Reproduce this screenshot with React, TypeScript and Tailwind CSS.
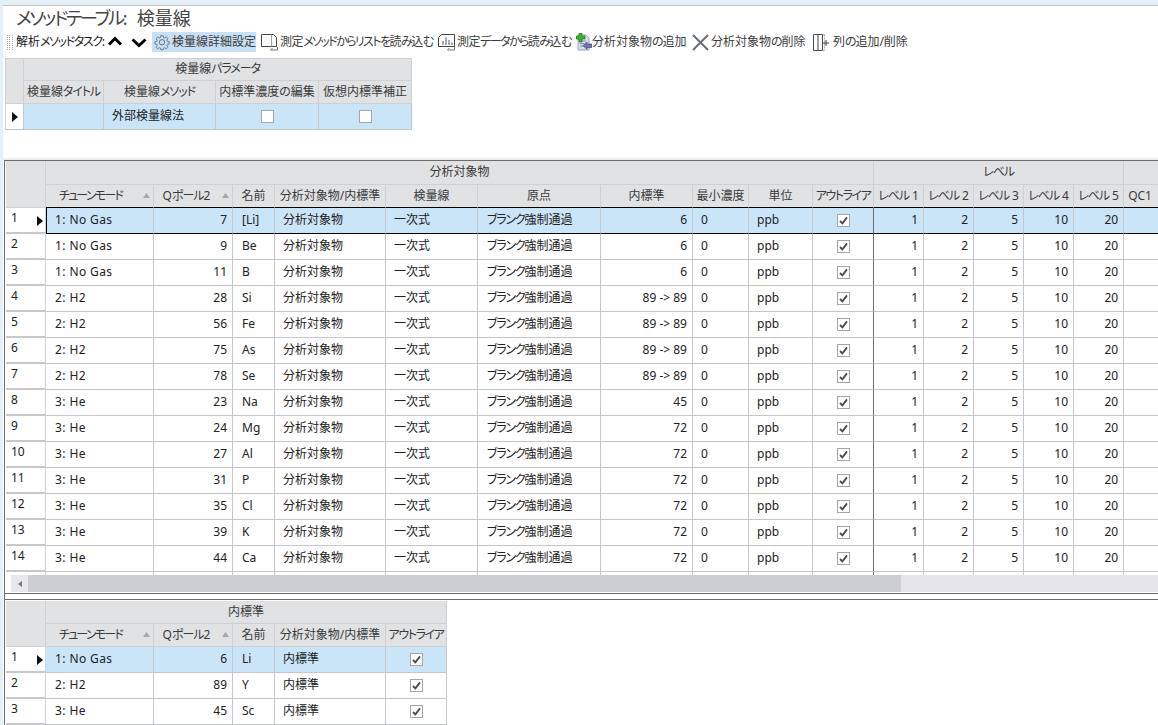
import React from "react";

const K = ({ t, extra }: { t: string; extra?: string }) => (
  <>
    {t.split(/([ぁ-んァ-ヶー]+)/).map((p, i) =>
      i % 2 === 1 ? (
        <span key={i} className={extra ?? "tracking-[-0.09em]"}>{p}</span>
      ) : (
        <React.Fragment key={i}>{p}</React.Fragment>
      )
    )}
  </>
);

const Arrow = () => (
  <svg width="6" height="10" viewBox="0 0 6 10" className="shrink-0">
    <path d="M0 0L6 5L0 10Z" fill="#111" />
  </svg>
);

const Check = ({ checked }: { checked: boolean }) => (
  <span className="inline-flex w-[13px] h-[13px] border border-[#a6a6a6] bg-white items-center justify-center align-middle">
    {checked && (
      <svg width="9" height="9" viewBox="0 0 9 9">
        <path d="M1 5L3.4 7.4L8 1.4" fill="none" stroke="#4a4a4a" strokeWidth="1.8" />
      </svg>
    )}
  </span>
);

const Sort = () => (
  <svg width="7" height="5" viewBox="0 0 7 5" className="shrink-0">
    <path d="M3.5 0L7 5H0Z" fill="#a8a8ac" />
  </svg>
);

const Gear = () => (
  <svg width="18" height="18" viewBox="0 0 24 24" fill="none" stroke="#5b6f80" strokeWidth="1.3" className="shrink-0">
    <path d="M10.3 2.5h3.4l.5 2.9 1.8.8 2.4-1.7 2.4 2.4-1.7 2.4.8 1.8 2.6.5v3.4l-2.6.5-.8 1.8 1.7 2.4-2.4 2.4-2.4-1.7-1.8.8-.5 2.3h-3.4l-.5-2.3-1.8-.8-2.4 1.7-2.4-2.4 1.7-2.4-.8-1.8-2.6-.5v-3.4l2.6-.5.8-1.8-1.7-2.4 2.4-2.4 2.4 1.7 1.8-.8z" transform="translate(1.2 1.2) scale(.9)" />
    <circle cx="12" cy="12.4" r="3.6" />
  </svg>
);

const ListImport = () => (
  <svg width="18" height="18" viewBox="0 0 18 18" fill="none" className="shrink-0">
    <path d="M.5 1.5h10v12H.5z" fill="#fff" stroke="#444" />
    <path d="M10.5 1.5h2l3 3v9h-5" fill="#fff" stroke="#444" />
    <path d="M16.5 14v3H9.5M9.5 17l2-2" stroke="#777" />
  </svg>
);

const DataImport = () => (
  <svg width="18" height="18" viewBox="0 0 18 18" fill="none" className="shrink-0">
    <path d="M.5 13.5v-9l3-3h13v12z" fill="#fff" stroke="#444" />
    <path d="M5 12V8M8 12V4.500M11 12V7M14 12V9.500" stroke="#555" />
    <path d="M16.500 14v3H9.500M9.500 17l2-2" stroke="#777" />
  </svg>
);

const AddAnalyte = () => (
  <svg width="16" height="18" viewBox="0 0 16 18" className="shrink-0">
    <path d="M2 2h8l3 3v12H2z" fill="#d4dcea" stroke="#9aa6bb" />
    <path d="M4 8h6M4 10.5h4M4 13h6" stroke="#8692a8" />
    <path d="M3 0h3v3h3v3H6v3H3V6H0V3h3z" fill="#3cb521" stroke="#1d6e10" strokeWidth=".6" />
    <path d="M7 12.5l4-3.5v2h5v3.5h-5v2z" fill="#6f6fb4" stroke="#3d3d80" strokeWidth=".6" />
  </svg>
);

const Cross = () => (
  <svg width="17" height="17" viewBox="0 0 17 17" className="shrink-0">
    <path d="M1 1L16 16M16 1L1 16" stroke="#6a7078" strokeWidth="2" />
  </svg>
);

const Columns = () => (
  <svg width="16" height="17" viewBox="0 0 16 17" fill="none" className="shrink-0">
    <path d="M.5 .5h9v16h-9zM5 .5v16" stroke="#4a4a4a" strokeWidth="1" />
    <path d="M9.500 .5h2.500M9.500 16.500h2.500M11.500 .5v16" stroke="#aaa" strokeDasharray="2 1" />
    <path d="M10 9h6M13 6v6" stroke="#444" />
  </svg>
);

const ToolItem = ({ icon, label, active, cls, kana }: { icon: React.ReactNode; label: string; active?: boolean; cls: string; kana?: string }) => (
  <div className={`flex items-center h-[20px] shrink-0 ${cls} ${active ? "bg-[#c7e0f4]" : ""}`}>
    {icon}
    <span className="text-[#3c3c3c]"><K t={label} extra={kana ?? "tracking-[-1.2px]"} /></span>
  </div>
);

const H = "bg-[#e1e2e4] border-r border-b border-[#cfd0d6] text-[#3a3a3a] font-normal p-0 pb-[1px] text-center whitespace-nowrap overflow-hidden";

const RowHead = ({ n, current }: { n?: number; current?: boolean }) => (
  <td className="bg-white border-r border-b-2 border-r-[#d4d4d8] border-b-[#c8c8cc] p-0 align-top">
    <div className="flex justify-between pl-[5px] pr-[2px] h-full">
      <span className="pt-[1px] leading-[18px]">{n}</span>
      {current && <span className="pt-[8px]"><Arrow /></span>}
    </div>
  </td>
);

const GRID = "border-r border-b border-[#c4c6ca] p-0 pb-[2px] whitespace-nowrap overflow-hidden";

type Row = [string, number, string, string];

const rows: Row[] = [
  ["1: No Gas", 7, "[Li]", "6"],
  ["1: No Gas", 9, "Be", "6"],
  ["1: No Gas", 11, "B", "6"],
  ["2: H2", 28, "Si", "89 -> 89"],
  ["2: H2", 56, "Fe", "89 -> 89"],
  ["2: H2", 75, "As", "89 -> 89"],
  ["2: H2", 78, "Se", "89 -> 89"],
  ["3: He", 23, "Na", "45"],
  ["3: He", 24, "Mg", "72"],
  ["3: He", 27, "Al", "72"],
  ["3: He", 31, "P", "72"],
  ["3: He", 35, "Cl", "72"],
  ["3: He", 39, "K", "72"],
  ["3: He", 44, "Ca", "72"],
];

const istd: Row[] = [
  ["1: No Gas", 6, "Li", "内標準"],
  ["2: H2", 89, "Y", "内標準"],
  ["3: He", 45, "Sc", "内標準"],
];

const levels = [1, 2, 5, 10, 20];

const SortHead = ({ label, cls, span, extra }: { label: string; cls: string; span: string; extra: string }) => (
  <th className={H + " " + cls}>
    <div className="flex items-center justify-between pr-[3px]">
      <span className={`flex-1 text-center ${span}`}><K t={label} extra={extra} /></span>
      <Sort />
    </div>
  </th>
);

function ParamTable() {
  return (
    <table className="table-fixed border-separate border-spacing-0 w-[406px] ml-[2px] mt-[6px] border-l border-t border-[#cfd0d6]">
      <colgroup>
        <col className="w-[18px]" />
        <col className="w-[80px]" />
        <col className="w-[112px]" />
        <col className="w-[103px]" />
        <col className="w-[93px]" />
      </colgroup>
      <thead>
        <tr className="h-[22px]">
          <th rowSpan={2} className={H}></th>
          <th colSpan={4} className={H}><K t="検量線パラメータ" /></th>
        </tr>
        <tr className="h-[23px]">
          <th className={H}><K t="検量線タイトル" /></th>
          <th className={H}><K t="検量線メソッド" /></th>
          <th className={H}>内標準濃度の編集</th>
          <th className={H}>仮想内標準補正</th>
        </tr>
      </thead>
      <tbody>
        <tr className="h-[26px]">
          <td className="bg-white border-r border-b border-[#c4c6ca] p-0">
            <div className="flex justify-center"><Arrow /></div>
          </td>
          <td className={GRID + " bg-[#cbe5f8]"}></td>
          <td className={GRID + " bg-[#cbe5f8] pl-[8px]"}>外部検量線法</td>
          <td className={GRID + " bg-[#cbe5f8] text-center"}><Check checked={false} /></td>
          <td className={GRID + " bg-[#cbe5f8] text-center"}><Check checked={false} /></td>
        </tr>
      </tbody>
    </table>
  );
}

function MainTable() {
  return (
    <table className="table-fixed border-separate border-spacing-0 w-[1191px]">
      <colgroup>
        <col className="w-[40px]" />
        <col className="w-[108px]" />
        <col className="w-[79px]" />
        <col className="w-[42px]" />
        <col className="w-[111px]" />
        <col className="w-[92px]" />
        <col className="w-[123px]" />
        <col className="w-[92px]" />
        <col className="w-[56px]" />
        <col className="w-[64px]" />
        <col className="w-[61px]" />
        <col className="w-[50px]" />
        <col className="w-[50px]" />
        <col className="w-[50px]" />
        <col className="w-[50px]" />
        <col className="w-[50px]" />
        <col className="w-[73px]" />
      </colgroup>
      <thead>
        <tr className="h-[24px]">
          <th rowSpan={2} className={H}></th>
          <th colSpan={10} className={H}>分析対象物</th>
          <th colSpan={5} className={H}><K t="レベル" /></th>
          <th className={H}></th>
        </tr>
        <tr className="h-[23px]">
          <SortHead label="チューンモード" cls="border-b-black" span="pr-[8px]" extra="tracking-[-1.8px]" />
          <SortHead label="Qポール2" cls="border-b-black" span="pr-[3px]" extra="tracking-[-1px]" />
          {["名前", "分析対象物/内標準", "検量線", "原点", "内標準", "最小濃度", "単位", "アウトライア"].map((t) => (
            <th key={t} className={H + " border-b-black"}><K t={t} extra="tracking-[-1.4px]" /></th>
          ))}
          {levels.map((_, i) => (
            <th key={i} className={H + " border-b-black"}><K t={`レベル ${i + 1}`} /></th>
          ))}
          <th className={H + " border-b-black text-left pl-[4px]"}>QC1</th>
        </tr>
      </thead>
      <tbody>
        {rows.map((r, i) => {
          const sel = i === 0;
          const bg = sel ? "bg-[#cbe5f8] border-b-black" : "";
          return (
            <tr key={i} className="h-[26px]">
              <RowHead n={i + 1} current={sel} />
              <td className={`${GRID} ${bg} ${sel ? "border-l border-l-black" : ""} ${sel ? "pl-[8px]" : "pl-[9px]"} tracking-[0.4px]`}>{r[0]}</td>
              <td className={`${GRID} ${bg} text-right pr-[5px]`}>{r[1]}</td>
              <td className={`${GRID} ${bg} pl-[9px]`}>{r[2]}</td>
              <td className={`${GRID} ${bg} pl-[8px]`}>分析対象物</td>
              <td className={`${GRID} ${bg} pl-[8px]`}>一次式</td>
              <td className={`${GRID} ${bg} pl-[9px]`}><K t="ブランク強制通過" extra="tracking-[-1.2px]" /></td>
              <td className={`${GRID} ${bg} text-right pr-[5px]`}>{r[3]}</td>
              <td className={`${GRID} ${bg} pl-[8px]`}>0</td>
              <td className={`${GRID} ${bg} pl-[8px]`}>ppb</td>
              <td className={`${GRID} ${bg} text-center border-r-[#707070]`}><Check checked /></td>
              {levels.map((l) => (
                <td key={l} className={`${GRID} ${bg} text-right pr-[5px]`}>{l}</td>
              ))}
              <td className={`${GRID} ${bg}`}></td>
            </tr>
          );
        })}
        <tr className="h-[26px]">
          <RowHead />
          {Array.from({ length: 10 }).map((_, i) => (
            <td key={i} className={`${GRID} ${i === 9 ? "border-r-[#707070]" : ""}`}></td>
          ))}
          {Array.from({ length: 6 }).map((_, i) => (
            <td key={i} className={GRID}></td>
          ))}
        </tr>
      </tbody>
    </table>
  );
}

function IstdTable() {
  return (
    <table className="table-fixed border-separate border-spacing-0 w-[441px]">
      <colgroup>
        <col className="w-[40px]" />
        <col className="w-[108px]" />
        <col className="w-[79px]" />
        <col className="w-[42px]" />
        <col className="w-[111px]" />
        <col className="w-[61px]" />
      </colgroup>
      <thead>
        <tr className="h-[23px]">
          <th rowSpan={2} className={H}></th>
          <th colSpan={5} className={H}>内標準</th>
        </tr>
        <tr className="h-[23px]">
          <SortHead label="チューンモード" cls="" span="pr-[8px]" extra="tracking-[-1.8px]" />
          <SortHead label="Qポール2" cls="" span="pr-[3px]" extra="tracking-[-1px]" />
          {["名前", "分析対象物/内標準", "アウトライア"].map((t) => (
            <th key={t} className={H}><K t={t} extra="tracking-[-1.4px]" /></th>
          ))}
        </tr>
      </thead>
      <tbody>
        {istd.map((r, i) => {
          const bg = i === 0 ? "bg-[#cbe5f8]" : "";
          return (
            <tr key={i} className="h-[26px]">
              <RowHead n={i + 1} current={i === 0} />
              <td className={`${GRID} ${bg} pl-[9px] tracking-[0.4px]`}>{r[0]}</td>
              <td className={`${GRID} ${bg} text-right pr-[5px]`}>{r[1]}</td>
              <td className={`${GRID} ${bg} pl-[9px]`}>{r[2]}</td>
              <td className={`${GRID} ${bg} pl-[8px]`}>{r[3]}</td>
              <td className={`${GRID} ${bg} text-center`}><Check checked /></td>
            </tr>
          );
        })}
      </tbody>
    </table>
  );
}

export default function App() {
  return (
    <div className="w-[1158px] h-[725px] overflow-hidden bg-white border-l-[3px] border-[#e4eff6] flex flex-col text-[12px] leading-[16px] text-[#222] font-['Noto_Sans','Noto_Sans_CJK_JP',sans-serif] [font-feature-settings:'palt']">
      <div className="h-[6px] shrink-0 -ml-[3px] bg-[#e4eff6] border-b border-[#bfc4c8]"></div>
      <div className="h-[26px] shrink-0 pl-[13px] text-[18px] leading-[25px] text-[#444] whitespace-pre"><K t="メソッドテーブル" extra="tracking-[-0.125em]" />:  検量線</div>
      <div className="h-[20px] shrink-0 flex items-center whitespace-nowrap">
        <div className="grid grid-cols-3 gap-[1px] w-[6px] ml-[4px] mr-[3px] shrink-0">
          {Array.from({ length: 24 }).map((_, i) => (
            <span key={i} className="w-[1px] h-[1px] bg-[#a8a8a8]"></span>
          ))}
        </div>
        <span className="text-[#222] w-[91px] shrink-0"><K t="解析メソッドタスク" extra="tracking-[-1.4px]" />:</span>
        <svg width="16" height="10" viewBox="0 0 16 10" className="shrink-0 -mt-[2px]">
          <path d="M2 8.500L8 2.500L14 8.500" fill="none" stroke="#000" strokeWidth="3" />
        </svg>
        <svg width="16" height="10" viewBox="0 0 16 10" className="shrink-0 ml-[8px] mt-[2px]">
          <path d="M1.500 1.500L8 7.500L14.500 1.500" fill="none" stroke="#000" strokeWidth="3" />
        </svg>
        <div className="ml-[5px] flex">
          <ToolItem icon={<Gear />} label="検量線詳細設定" active cls="w-[104px] gap-[1px] pl-[1px]" />
        </div>
        <div className="ml-[5px]"><ToolItem icon={<ListImport />} label="測定メソッドからリストを読み込む" kana="tracking-[-1.6px]" cls="w-[174px] gap-[1px] tracking-[-0.4px]" /></div>
        <div className="ml-[3px]"><ToolItem icon={<DataImport />} label="測定データから読み込む" kana="tracking-[-1.6px]" cls="w-[135px] gap-[1px] tracking-[-0.4px]" /></div>
        <div className="ml-[3px]"><ToolItem icon={<AddAnalyte />} label="分析対象物の追加" cls="w-[111px] gap-[0px]" /></div>
        <div className="ml-[5px]"><ToolItem icon={<Cross />} label="分析対象物の削除" cls="w-[114px] gap-[2px]" /></div>
        <div className="ml-[7px]"><ToolItem icon={<Columns />} label="列の追加/削除" cls="w-[96px] gap-[4px]" /></div>
      </div>
      <ParamTable />
      <div className="mt-[28px] h-[2px] shrink-0 bg-[#eeeeee]"></div>
      <div className="ml-[1px] flex-1 min-h-0 border-l border-[#707070] flex flex-col">
        <div className="border-t border-b border-[#6c6c6c] shrink-0">
          <div className="h-[414px] overflow-hidden pl-[1px]">
            <MainTable />
          </div>
          <div className="h-[18px] flex pl-[6px]">
            <div className="w-[17px] h-[17px] bg-[#e8e8ec] flex items-center justify-center">
              <svg width="4" height="6" viewBox="0 0 4 6"><path d="M4 0L0 3L4 6Z" fill="#7a7a80" /></svg>
            </div>
            <div className="w-[873px] h-[17px] bg-[#cdced3]"></div>
            <div className="flex-1 h-[17px] bg-[#e6e6ea]"></div>
          </div>
        </div>
        <div className="mt-[5px] border-t border-[#6c6c6c] pl-[1px] pt-[1px]">
          <IstdTable />
        </div>
      </div>
    </div>
  );
}
